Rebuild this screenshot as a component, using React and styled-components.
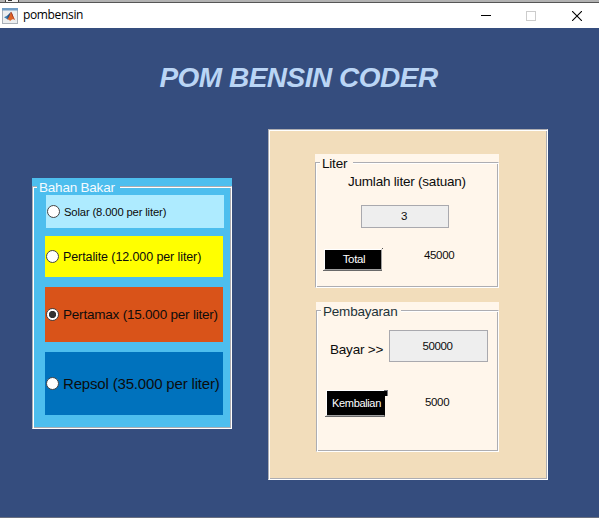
import React from "react";
import styled, { createGlobalStyle, css } from "styled-components";

const GREY = "#adadb2";

const GlobalStyle = createGlobalStyle`
  * { box-sizing: border-box; }
  html, body { margin: 0; padding: 0; overflow: hidden; }
  body { font-family: "Liberation Sans", Arial, sans-serif; font-kerning: none; color: #0c0c0c; }
`;

const etched = css`
  border: 1px solid;
  border-color: ${GREY} #fff #fff ${GREY};
  box-shadow: inset 1px 1px 0 #fff, inset -1px -1px 0 ${GREY};
`;

const labelText = css`
  font-size: 13.5px;
  line-height: 16px;
  letter-spacing: -0.21px;
`;

const smallText = css`
  font-family: "Liberation Sans", Arial, sans-serif;
  font-size: 11.5px;
  line-height: 14px;
  letter-spacing: -0.35px;
`;

const Window = styled.div`
  width: 599px;
  height: 518px;
  display: flex;
  flex-direction: column;
  background: #354d7e;
  border-bottom: 1px solid #6a7080;
  overflow: hidden;
`;

const TopEdge = styled.div`
  height: 3px;
  flex: none;
  display: flex;
  padding-left: 5px;
  background: #b2b2b2;
  border-bottom: 1px solid #555;
`;

const EdgeTab = styled.div`
  width: 14px;
  height: 2px;
  background: #f2f2f2;
  border: solid #444;
  border-width: 0 1px;
  padding-left: 2px;
  &::before {
    content: "";
    display: block;
    width: 4px;
    height: 1px;
    background: #333;
  }
`;

const TitleBar = styled.header`
  height: 25px;
  flex: none;
  display: flex;
  align-items: center;
  padding-left: 2px;
  background: #fff;
`;

const TitleText = styled.span`
  flex: 1;
  margin-left: 5px;
  padding-bottom: 1px;
  font: 12px/16px "Open Sans", "Noto Sans", sans-serif;
  letter-spacing: -0.35px;
  color: #000;
`;

const WindowControls = styled.div`
  display: flex;
  margin-right: -1px;
`;

const WindowButton = styled.button`
  width: 46px;
  height: 25px;
  padding: 0;
  border: 0;
  background: none;
  display: flex;
  align-items: center;
  justify-content: center;
`;

const Heading = styled.h1`
  flex: none;
  margin: 0;
  height: 101px;
  padding: 34px 2px 0 0;
  text-align: center;
  font-size: 28px;
  line-height: 32px;
  letter-spacing: -0.5px;
  font-weight: bold;
  font-style: italic;
  color: #bad5f5;
`;

const Columns = styled.main`
  display: flex;
  align-items: flex-start;
  gap: 36px;
  padding-left: 32px;
`;

const Group = styled.section`
  width: ${(p) => p.$w}px;
  height: ${(p) => p.$h}px;
  margin-top: ${(p) => p.$top || 0}px;
  margin-left: ${(p) => p.$left || 0}px;
  padding-top: 8px;
  background: ${(p) => p.$bg};
`;

const GroupFrame = styled.div`
  ${etched}
  height: 100%;
  padding-left: 4px;
`;

const Legend = styled.h2`
  ${labelText}
  width: max-content;
  height: 16px;
  margin: -7px 0 0;
  padding: 0 ${(p) => p.$after}px 0 2px;
  background: ${(p) => p.$bg};
  color: ${(p) => p.$color};
  font-weight: normal;
`;

const Option = styled.label`
  width: 178px;
  height: ${(p) => p.$h}px;
  margin: ${(p) => p.$top}px 0 0 ${(p) => p.$left}px;
  padding-left: 1px;
  display: flex;
  align-items: center;
  gap: 4px;
  white-space: nowrap;
  background: ${(p) => p.$bg};
  font-size: ${(p) => p.$size}px;
  letter-spacing: ${(p) => p.$spacing}px;
  line-height: 18px;
`;

const OptionLabel = styled.span`
  padding-top: 1px;
`;

const Radio = styled.input`
  appearance: none;
  flex: none;
  width: 13px;
  height: 13px;
  margin: 0;
  border: 1px solid #444;
  border-radius: 50%;
  background: #fff;
  &:checked {
    background: radial-gradient(circle, #333 0 3.3px, #fff 4px);
  }
`;

const Panel = styled.section`
  ${etched}
  width: 280px;
  height: 351px;
  background: #f2ddbb;
`;

const Caption = styled.p`
  ${labelText}
  margin: 2px 0 0;
  padding-left: 28px;
`;

const Field = styled.input`
  ${smallText}
  display: block;
  width: ${(p) => p.$w}px;
  height: ${(p) => p.$h}px;
  margin: ${(p) => p.$margin || 0};
  padding: 0 2px ${(p) => p.$lift || 0}px 0;
  border: 1px solid #a9a9ae;
  border-radius: 0;
  background: #eee;
  color: #0c0c0c;
  text-align: center;
`;

const Line = styled.div`
  display: flex;
  align-items: flex-start;
  margin-top: ${(p) => p.$top}px;
  margin-left: ${(p) => p.$left}px;
`;

const FieldLabel = styled.span`
  ${labelText}
  width: 59px;
  padding-top: 12px;
`;

const Push = styled.button`
  ${smallText}
  position: relative;
  width: ${(p) => p.$w}px;
  height: ${(p) => p.$h}px;
  padding: 0 0 1px 2px;
  border: 1px solid #fff;
  border-bottom-color: #a0a0a0;
  border-right-color: ${(p) => (p.$notch ? "#000" : "#a0a0a0")};
  border-radius: 0;
  background: #000;
  color: #fff;
  font-size: ${(p) => p.$size}px;
  white-space: nowrap;
  &::before {
    content: "";
    position: absolute;
    left: -2px;
    right: -1px;
    bottom: -2px;
    height: 1px;
    background: #696969;
  }
  &::after {
    content: "";
    position: absolute;
    ${(p) =>
      p.$notch
        ? css`
            top: -1px;
            right: -4px;
            width: 3px;
            height: 5px;
            background: #000;
            border-right: 1px solid #77777c;
            border-top: 1px solid #77777c;
          `
        : css`
            top: -2px;
            right: -2px;
            width: 1px;
            height: 1px;
            background: #555;
          `}
  }
`;

const Result = styled.output`
  ${smallText}
  margin-top: ${(p) => p.$top}px;
  padding-left: ${(p) => p.$left}px;
`;

const fuels = [
  { label: "Solar (8.000 per liter)", h: 33, top: -1, left: 9, size: 11.25, spacing: -0.15, bg: "#aeebff" },
  { label: "Pertalite (12.000 per liter)", h: 41, top: 8, left: 8, size: 12.5, spacing: -0.1, bg: "#ffff00" },
  { label: "Pertamax (15.000 per liter)", h: 55, top: 10, left: 8, size: 13.5, spacing: -0.21, bg: "#d95319", checked: true },
  { label: "Repsol (35.000 per liter)", h: 63, top: 10, left: 8, size: 15, spacing: -0.17, bg: "#0072bd" },
];

const MatlabIcon = () => (
  <svg width="16" height="16" viewBox="0 0 16 16">
    <rect x="0.5" y="0.5" width="15" height="15" fill="#eceef0" stroke="#a9b0b8" />
    <path d="M0 0h16v2.5H0z" fill="#6f9cc4" />
    <path d="M2 9.2L5.5 7.6L7.5 9.5L5.3 11.2Z" fill="#3b7fb5" />
    <path d="M5.5 7.6L9 3.8L8.2 9.2L6.5 11.5L5.3 11.2Z" fill="#31527f" />
    <path d="M9 3.8C10.2 4.5 11.3 9.5 13.2 12.2C11.5 10.8 10.3 10.5 8 13.2C7.5 11.8 6.8 11.4 5.3 11.2C7.5 9.5 8 5.5 9 3.8Z" fill="#df6325" />
    <path d="M9 3.8C10.2 4.5 11.3 9.5 13.2 12.2C11.2 10.6 9.7 7 9 3.8Z" fill="#8f2520" />
  </svg>
);

export default function App() {
  return (
    <Window>
      <GlobalStyle />
      <TopEdge><EdgeTab /></TopEdge>
      <TitleBar>
        <MatlabIcon />
        <TitleText>pombensin</TitleText>
        <WindowControls>
          <WindowButton aria-label="Minimize">
            <svg width="12" height="10" shapeRendering="crispEdges"><path d="M2 4.5h10" stroke="#000" /></svg>
          </WindowButton>
          <WindowButton aria-label="Maximize">
            <svg width="10" height="10"><rect x="0.5" y="0.5" width="9" height="9" fill="none" stroke="#ccc" /></svg>
          </WindowButton>
          <WindowButton aria-label="Close">
            <svg width="10" height="10"><path d="M0 0l10 10M10 0L0 10" stroke="#000" strokeWidth="1.1" /></svg>
          </WindowButton>
        </WindowControls>
      </TitleBar>
      <Heading>POM BENSIN CODER</Heading>
      <Columns>
        <Group $w={200} $h={251} $top={49} $bg="#4dbeee">
          <GroupFrame>
            <Legend $bg="#4dbeee" $color="#f5fbff" $after={5}>Bahan Bakar</Legend>
            {fuels.map((f) => (
              <Option key={f.label} $h={f.h} $top={f.top} $left={f.left} $size={f.size} $spacing={f.spacing} $bg={f.bg}>
                <Radio type="radio" name="fuel" defaultChecked={f.checked} />
                <OptionLabel>{f.label}</OptionLabel>
              </Option>
            ))}
          </GroupFrame>
        </Group>
        <Panel>
          <Group $w={184} $h={134} $top={24} $left={46} $bg="#fff6eb">
            <GroupFrame>
              <Legend $bg="#fff6eb" $color="#0c0c0c" $after={6}>Liter</Legend>
              <Caption>Jumlah liter (satuan)</Caption>
              <Field $w={88} $h={23} $lift={2} $margin="15px 0 0 41px" defaultValue="3" />
              <Line $top={21} $left={4}>
                <Push $w={58} $h={21} $size={11.5}>Total</Push>
                <Result $top={-1} $left={42}>45000</Result>
              </Line>
            </GroupFrame>
          </Group>
          <Group $w={183} $h={150} $top={14} $left={47} $bg="#fff6eb">
            <GroupFrame>
              <Legend $bg="#fff6eb" $color="#1d3338" $after={4}>Pembayaran</Legend>
              <Line $top={10} $left={9}>
                <FieldLabel>Bayar &gt;&gt;</FieldLabel>
                <Field $w={99} $h={32} defaultValue="50000" />
              </Line>
              <Line $top={28} $left={5}>
                <Push $w={59} $h={26} $size={11} $notch>Kembalian</Push>
                <Result $top={5} $left={40}>5000</Result>
              </Line>
            </GroupFrame>
          </Group>
        </Panel>
      </Columns>
    </Window>
  );
}
